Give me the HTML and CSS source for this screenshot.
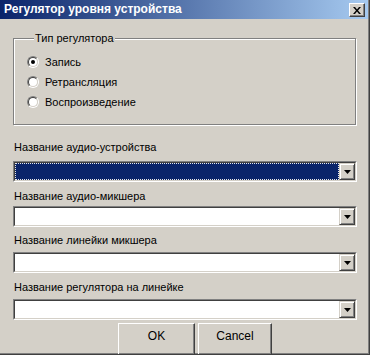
FILE: index.html
```html
<!DOCTYPE html>
<html lang="ru">
<head>
<meta charset="UTF-8" />
<meta name="viewport" content="width=device-width, initial-scale=1" />
<link rel="stylesheet" href="styles.css">
</head>
<body>

<div class="window">
  <div class="titlebar">
    <span class="title">Регулятор уровня устройства</span>
    <button class="close" aria-label="Закрыть">
      <svg width="8" height="7" viewBox="0 0 8 7">
        <path d="M0 0h2l2 2.4 2-2.4h2l-3 3.5 3 3.5h-2l-2-2.4-2 2.4h-2l3-3.5z" fill="#000" />
      </svg>
    </button>
  </div>

  <div class="content">
    <fieldset class="group">
      <legend>Тип регулятора</legend>
      <label class="radio">
        <span class="radio-box"><span class="radio-inner"><span class="radio-dot"></span></span></span>
        Запись
      </label>
      <label class="radio">
        <span class="radio-box"><span class="radio-inner"></span></span>
        Ретрансляция
      </label>
      <label class="radio">
        <span class="radio-box"><span class="radio-inner"></span></span>
        Воспроизведение
      </label>
    </fieldset>

    <div class="field f1">
      <div class="caption">Название аудио-устройства</div>
      <div class="combo focused">
        <div class="combo-inner">
          <div class="combo-text"></div>
          <div class="combo-btn"><svg width="7" height="4" viewBox="0 0 7 4"><path d="M0 0h7l-3.5 4z" fill="#000" /></svg></div>
        </div>
      </div>
    </div>

    <div class="field f2">
      <div class="caption">Название аудио-микшера</div>
      <div class="combo">
        <div class="combo-inner">
          <div class="combo-text"></div>
          <div class="combo-btn"><svg width="7" height="4" viewBox="0 0 7 4"><path d="M0 0h7l-3.5 4z" fill="#000" /></svg></div>
        </div>
      </div>
    </div>

    <div class="field f3">
      <div class="caption">Название линейки микшера</div>
      <div class="combo">
        <div class="combo-inner">
          <div class="combo-text"></div>
          <div class="combo-btn"><svg width="7" height="4" viewBox="0 0 7 4"><path d="M0 0h7l-3.5 4z" fill="#000" /></svg></div>
        </div>
      </div>
    </div>

    <div class="field f4">
      <div class="caption">Название регулятора на линейке</div>
      <div class="combo">
        <div class="combo-inner">
          <div class="combo-text"></div>
          <div class="combo-btn"><svg width="7" height="4" viewBox="0 0 7 4"><path d="M0 0h7l-3.5 4z" fill="#000" /></svg></div>
        </div>
      </div>
    </div>

    <div class="buttons">
      <button class="btn btn-ok">OK</button>
      <button class="btn btn-cancel">Cancel</button>
    </div>
  </div>
</div>

</body>
</html>
```

FILE: styles.css
```css
body {
  margin: 0;
  font-family: "Liberation Sans", Arial, sans-serif;
  font-size: 11px;
  color: #000;
  background: #d4d0c8;
}

.window {
  width: 370px;
  height: 355px;
  box-sizing: border-box;
  overflow: hidden;
  background: #d4d0c8;
  border-right: 1px solid #404040;
  border-bottom: 1px solid #404040;
  box-shadow: inset -1px -1px 0 #808080;
}

.titlebar {
  height: 19px;
  display: flex;
  align-items: flex-start;
  justify-content: space-between;
  padding: 0 3px 0 3px;
  margin-right: 1px;
  background: linear-gradient(to right, #0a246a, #a6caf0);
}

.title {
  color: #fff;
  font-weight: bold;
  font-size: 12px;
  line-height: 19px;
  padding-left: 1px;
}

.close {
  margin-top: 3px;
  width: 16px;
  height: 14px;
  padding: 0;
  box-sizing: border-box;
  background: #d4d0c8;
  border: 1px solid;
  border-color: #fff #404040 #404040 #fff;
  box-shadow: inset -1px -1px 0 #808080;
  display: flex;
  align-items: center;
  justify-content: center;
}

.content {
  padding: 0 0 0 13px;
}

.group {
  margin: 13px 0 0;
  width: 343px;
  box-sizing: border-box;
  padding: 7px 0 12px 13px;
  border: 1px solid #808080;
  box-shadow: 1px 1px 0 #fff, inset 1px 1px 0 #fff;
}

.group legend {
  margin-left: 7px;
  padding: 0 1px;
  line-height: 13px;
  background: #d4d0c8;
}

.radio {
  display: flex;
  align-items: center;
  gap: 6px;
  height: 20px;
}

.radio-box {
  width: 12px;
  height: 12px;
  box-sizing: border-box;
  border-radius: 50%;
  border: 1px solid;
  border-color: #808080 #fff #fff #808080;
  display: flex;
  align-items: center;
  justify-content: center;
}

.radio-inner {
  width: 10px;
  height: 10px;
  box-sizing: border-box;
  border-radius: 50%;
  border: 1px solid;
  border-color: #404040 #d4d0c8 #d4d0c8 #404040;
  background: #fff;
  display: flex;
  align-items: center;
  justify-content: center;
}

.radio-dot {
  width: 4px;
  height: 4px;
  border-radius: 50%;
  background: #000;
}

.caption {
  line-height: 13px;
  padding-left: 1px;
}

.f1 { margin-top: 16px; }
.f1 .combo { margin-top: 7px; }
.f2 { margin-top: 8px; }
.f2 .combo { margin-top: 3px; }
.f3 { margin-top: 7px; }
.f3 .combo { margin-top: 5px; }
.f4 { margin-top: 8px; }
.f4 .combo { margin-top: 5px; }

.combo {
  width: 344px;
  height: 21px;
  box-sizing: border-box;
  border: 1px solid;
  border-color: #808080 #fff #fff #808080;
}

.combo-inner {
  height: 100%;
  box-sizing: border-box;
  border: 1px solid;
  border-color: #404040 #d4d0c8 #d4d0c8 #404040;
  background: #fff;
  display: flex;
}

.combo-text {
  flex: 1;
}

.focused .combo-text {
  background: #0a246a;
  border: 1px dotted #e8e8e8;
}

.combo-btn {
  width: 16px;
  box-sizing: border-box;
  background: #d4d0c8;
  border: 1px solid;
  border-color: #d4d0c8 #404040 #404040 #d4d0c8;
  box-shadow: inset 1px 1px 0 #fff, inset -1px -1px 0 #808080;
  display: flex;
  align-items: center;
  justify-content: center;
}

.buttons {
  display: flex;
  gap: 3px;
  margin: 3px 0 0 105px;
}

.btn {
  height: 32px;
  padding: 0 0 6px;
  box-sizing: border-box;
  font-family: "Liberation Sans", Arial, sans-serif;
  font-size: 12px;
  color: #000;
  background: #d4d0c8;
  border: 1px solid;
  border-color: #fff #404040 #404040 #fff;
  box-shadow: inset -1px -1px 0 #808080;
}

.btn-ok { width: 77px; }
.btn-cancel { width: 74px; }
```
